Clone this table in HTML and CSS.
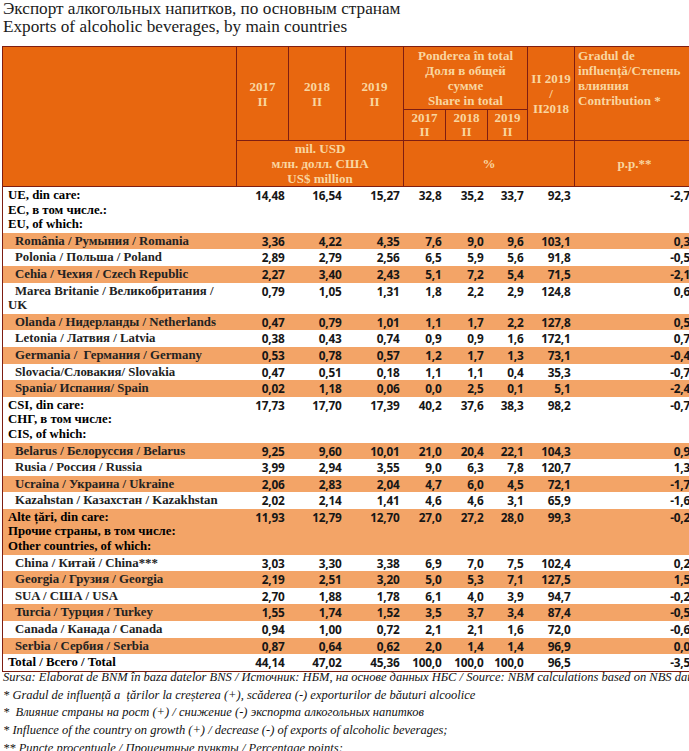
FILE: index.html
```html
<!DOCTYPE html>
<html>
<head>
<meta charset="utf-8">
<link rel="stylesheet" href="styles.css">
</head>
<body>
<div class="title">Экспорт алкогольных напитков, по основным странам<br>Exports of alcoholic beverages, by main countries</div>
<table class="tbl">
<colgroup>
<col class="c-label"><col class="c-y1"><col class="c-y2"><col class="c-y3"><col class="c-s1"><col class="c-s2"><col class="c-s3"><col class="c-idx"><col class="c-contr">
</colgroup>
<thead>
<tr class="h1">
<th rowspan="3"></th>
<th rowspan="2">2017<br>II</th>
<th rowspan="2">2018<br>II</th>
<th rowspan="2">2019<br>II</th>
<th colspan="3" class="pond">Ponderea în total<br>Доля в общей<br>сумме<br>Share in total</th>
<th rowspan="2">II 2019<br>/<br>II2018</th>
<th rowspan="2" class="contr">Gradul de<br>influență/Степень<br>влияния<br>Contribution *</th>
</tr>
<tr class="h2">
<th class="sub">2017<br>II</th>
<th class="sub">2018<br>II</th>
<th class="sub">2019<br>II</th>
</tr>
<tr class="h3">
<th colspan="3" class="unit">mil. USD<br>млн. долл. США<br>US$ million</th>
<th colspan="4">%</th>
<th>p.p.**</th>
</tr>
</thead>
<tbody>
<tr class="grp"><td class="lbl">UE, din care:<br>EC, в том числе.:<br>EU, of which:</td><td>14,48</td><td>16,54</td><td>15,27</td><td>32,8</td><td>35,2</td><td>33,7</td><td>92,3</td><td>-2,7</td></tr>
<tr class="band"><td class="lbl ind">România / Румыния / Romania</td><td>3,36</td><td>4,22</td><td>4,35</td><td>7,6</td><td>9,0</td><td>9,6</td><td>103,1</td><td>0,3</td></tr>
<tr><td class="lbl ind">Polonia / Польша / Poland</td><td>2,89</td><td>2,79</td><td>2,56</td><td>6,5</td><td>5,9</td><td>5,6</td><td>91,8</td><td>-0,5</td></tr>
<tr class="band"><td class="lbl ind">Cehia / Чехия / Czech Republic</td><td>2,27</td><td>3,40</td><td>2,43</td><td>5,1</td><td>7,2</td><td>5,4</td><td>71,5</td><td>-2,1</td></tr>
<tr><td class="lbl ind">Marea Britanie / Великобритания /<br>UK</td><td>0,79</td><td>1,05</td><td>1,31</td><td>1,8</td><td>2,2</td><td>2,9</td><td>124,8</td><td>0,6</td></tr>
<tr class="band"><td class="lbl ind">Olanda / Нидерланды / Netherlands</td><td>0,47</td><td>0,79</td><td>1,01</td><td>1,1</td><td>1,7</td><td>2,2</td><td>127,8</td><td>0,5</td></tr>
<tr><td class="lbl ind">Letonia / Латвия / Latvia</td><td>0,38</td><td>0,43</td><td>0,74</td><td>0,9</td><td>0,9</td><td>1,6</td><td>172,1</td><td>0,7</td></tr>
<tr class="band"><td class="lbl ind">Germania /&nbsp; Германия / Germany</td><td>0,53</td><td>0,78</td><td>0,57</td><td>1,2</td><td>1,7</td><td>1,3</td><td>73,1</td><td>-0,4</td></tr>
<tr><td class="lbl ind">Slovacia/Словакия/ Slovakia</td><td>0,47</td><td>0,51</td><td>0,18</td><td>1,1</td><td>1,1</td><td>0,4</td><td>35,3</td><td>-0,7</td></tr>
<tr class="band"><td class="lbl ind">Spania/ Испания/ Spain</td><td>0,02</td><td>1,18</td><td>0,06</td><td>0,0</td><td>2,5</td><td>0,1</td><td>5,1</td><td>-2,4</td></tr>
<tr class="grp"><td class="lbl">CSI, din care:<br>СНГ, в том числе:<br>CIS, of which:</td><td>17,73</td><td>17,70</td><td>17,39</td><td>40,2</td><td>37,6</td><td>38,3</td><td>98,2</td><td>-0,7</td></tr>
<tr class="band"><td class="lbl ind">Belarus / Белоруссия / Belarus</td><td>9,25</td><td>9,60</td><td>10,01</td><td>21,0</td><td>20,4</td><td>22,1</td><td>104,3</td><td>0,9</td></tr>
<tr><td class="lbl ind">Rusia / Россия / Russia</td><td>3,99</td><td>2,94</td><td>3,55</td><td>9,0</td><td>6,3</td><td>7,8</td><td>120,7</td><td>1,3</td></tr>
<tr class="band"><td class="lbl ind">Ucraina / Украина / Ukraine</td><td>2,06</td><td>2,83</td><td>2,04</td><td>4,7</td><td>6,0</td><td>4,5</td><td>72,1</td><td>-1,7</td></tr>
<tr><td class="lbl ind">Kazahstan / Казахстан / Kazakhstan</td><td>2,02</td><td>2,14</td><td>1,41</td><td>4,6</td><td>4,6</td><td>3,1</td><td>65,9</td><td>-1,6</td></tr>
<tr class="grp band"><td class="lbl">Alte țări, din care:<br>Прочие страны, в том числе:<br>Other countries, of which:</td><td>11,93</td><td>12,79</td><td>12,70</td><td>27,0</td><td>27,2</td><td>28,0</td><td>99,3</td><td>-0,2</td></tr>
<tr><td class="lbl ind">China / Китай / China***</td><td>3,03</td><td>3,30</td><td>3,38</td><td>6,9</td><td>7,0</td><td>7,5</td><td>102,4</td><td>0,2</td></tr>
<tr class="band"><td class="lbl ind">Georgia / Грузия / Georgia</td><td>2,19</td><td>2,51</td><td>3,20</td><td>5,0</td><td>5,3</td><td>7,1</td><td>127,5</td><td>1,5</td></tr>
<tr><td class="lbl ind">SUA / США / USA</td><td>2,70</td><td>1,88</td><td>1,78</td><td>6,1</td><td>4,0</td><td>3,9</td><td>94,7</td><td>-0,2</td></tr>
<tr class="band"><td class="lbl ind">Turcia / Турция / Turkey</td><td>1,55</td><td>1,74</td><td>1,52</td><td>3,5</td><td>3,7</td><td>3,4</td><td>87,4</td><td>-0,5</td></tr>
<tr><td class="lbl ind">Canada / Канада / Canada</td><td>0,94</td><td>1,00</td><td>0,72</td><td>2,1</td><td>2,1</td><td>1,6</td><td>72,0</td><td>-0,6</td></tr>
<tr class="band"><td class="lbl ind">Serbia / Сербия / Serbia</td><td>0,87</td><td>0,64</td><td>0,62</td><td>2,0</td><td>1,4</td><td>1,4</td><td>96,9</td><td>0,0</td></tr>
<tr class="grp total"><td class="lbl">Total / Всего / Total</td><td>44,14</td><td>47,02</td><td>45,36</td><td>100,0</td><td>100,0</td><td>100,0</td><td>96,5</td><td>-3,5</td></tr>
</tbody>
</table>
<div class="notes">
<div>Sursa: Elaborat de BNM în baza datelor BNS / Источник: НБМ, на основе данных НБС / Source: NBM calculations based on NBS data</div>
<div>* Gradul de influență a&nbsp; țărilor la creșterea (+), scăderea (-) exporturilor de băuturi alcoolice</div>
<div>*&nbsp; Влияние страны на рост (+) / снижение (-) экспорта алкогольных напитков</div>
<div>* Influence of the country on growth (+) / decrease (-) of exports of alcoholic beverages;</div>
<div>** Puncte procentuale / Процентные пункты / Percentage points;</div>
</div>
</body>
</html>
```
FILE: styles.css
```css
html, body {
  margin: 0;
  padding: 0;
  background: #fff;
}
body {
  width: 689px;
  height: 751px;
  overflow: hidden;
}
.title {
  font-family: "Liberation Serif", serif;
  font-size: 17.2px;
  line-height: 18px;
  color: #1a1a1a;
  padding: 0 0 0 3px;
  margin-bottom: 10px;
  white-space: nowrap;
}
.tbl {
  border-collapse: collapse;
  table-layout: fixed;
  width: 692px;
  margin-left: 2px;
  border: 1px solid #7e1d12;
}
.c-label { width: 234px; }
.c-y1 { width: 52px; }
.c-y2 { width: 57px; }
.c-y3 { width: 58px; }
.c-s1 { width: 42px; }
.c-s2 { width: 42px; }
.c-s3 { width: 40px; }
.c-idx { width: 47px; }
.c-contr { width: 120px; }

.tbl th {
  background: #e8670f;
  color: #f9d6a0;
  border: 1px solid #7e1d12;
  font-family: "Liberation Serif", serif;
  font-weight: bold;
  font-size: 13px;
  line-height: 15px;
  text-align: center;
  vertical-align: middle;
  padding: 0 2px;
}
.h1 { height: 63px; }
.h2 { height: 31px; }
.h3 { height: 45px; }
.tbl th.sub { line-height: 14px; }
.tbl th.contr {
  text-align: left;
  vertical-align: top;
  padding: 1px 3px;
  white-space: nowrap;
}

.tbl td {
  font-family: "Open Sans", sans-serif;
  font-weight: 700;
  font-size: 11.8px;
  line-height: 14.6px;
  color: #161616;
  text-align: right;
  vertical-align: top;
  padding: 1px 4px 1px 0;
  white-space: nowrap;
  letter-spacing: -0.2px;
}
.tbl td.lbl {
  font-family: "Liberation Serif", serif;
  font-size: 12.8px;
  text-align: left;
  padding-left: 5px;
  white-space: nowrap;
  color: #222;
  letter-spacing: 0;
}
.tbl td.ind { text-indent: 7px; }
.grp td.lbl { color: #000; }
.band td { background: #f3a467; }
.total td { border-bottom: 1px solid #7e1d12; }

.notes {
  font-family: "Liberation Serif", serif;
  font-style: italic;
  font-size: 12.5px;
  line-height: 17.8px;
  color: #111;
  padding-left: 3px;
  margin-top: -3px;
  white-space: nowrap;
}
```
